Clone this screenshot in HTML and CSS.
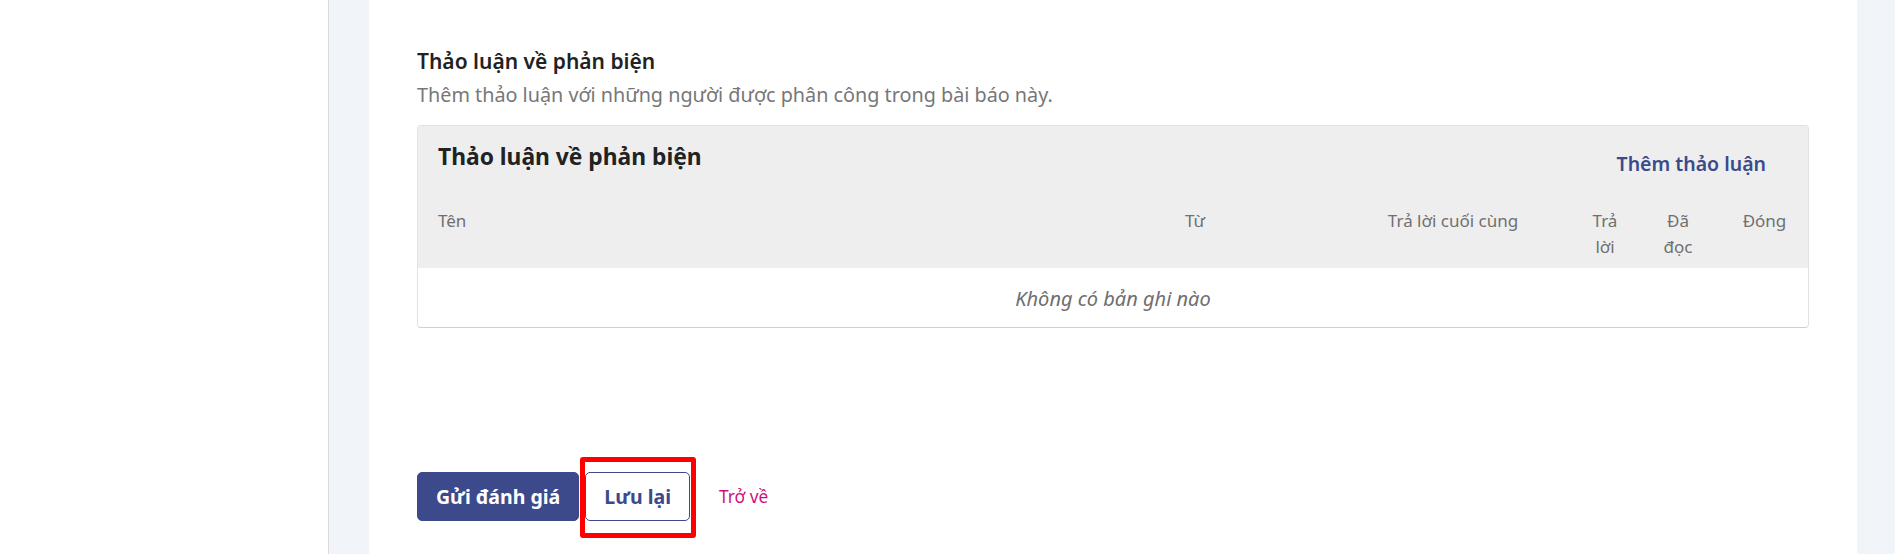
FILE: index.html
```html
<!DOCTYPE html>
<html lang="vi">
<head>
    <meta charset="UTF-8">
    <meta name="viewport" content="width=device-width, initial-scale=1.0">
    <title>Thảo luận về phản biện</title>
    <link rel="stylesheet" href="styles.css">
</head>
<body>
    <div class="sidebar"></div>

    <div class="main">
        <div class="panel">
            <h2 class="section-title">Thảo luận về phản biện</h2>
            <p class="section-desc">Thêm thảo luận với những người được phân công trong bài báo này.</p>

            <div class="grid-card">
                <div class="grid-head">
                    <h3>Thảo luận về phản biện</h3>
                    <a href="#" class="grid-action">Thêm thảo luận</a>
                </div>
                <table class="grid">
                    <colgroup>
                        <col>
                        <col class="col-from">
                        <col class="col-last">
                        <col class="col-replies">
                        <col class="col-read">
                        <col class="col-closed">
                    </colgroup>
                    <thead>
                        <tr>
                            <th class="name">Tên</th>
                            <th>Từ</th>
                            <th>Trả lời cuối cùng</th>
                            <th class="narrow">Trả lời</th>
                            <th class="narrow wide-pad">Đã đọc</th>
                            <th>Đóng</th>
                        </tr>
                    </thead>
                    <tbody>
                        <tr class="empty">
                            <td colspan="6">Không có bản ghi nào</td>
                        </tr>
                    </tbody>
                </table>
            </div>

            <div class="form-buttons">
                <button type="button" class="btn btn-primary">Gửi đánh giá</button>
                <span class="marked">
                    <button type="button" class="btn btn-default">Lưu lại</button>
                </span>
                <a href="#" class="cancel">Trở về</a>
            </div>
        </div>
    </div>
</body>
</html>
```

FILE: styles.css
```css
html, body {
    height: 100%;
}
body {
    margin: 0;
    display: flex;
    font-family: "Noto Sans", Arial, sans-serif;
    color: #222;
    background: #fff;
    overflow: hidden;
}
.sidebar {
    width: 328px;
    flex-shrink: 0;
    border-right: 1px solid #dcdcdc;
    background: #fff;
}
.main {
    flex: 1;
    background: #f1f4f9;
    padding: 0 38px 0 40px;
}
.panel {
    background: #fff;
    height: 100%;
    padding: 47px 48px 0 48px;
    box-sizing: border-box;
}
.section-title {
    margin: 0;
    font-size: 21px;
    line-height: 28px;
    font-weight: 600;
    color: #222;
}
.section-desc {
    margin: 6px 0 16px;
    font-size: 19.8px;
    line-height: 28px;
    color: #777;
}
.grid-card {
    border: 1px solid #e2e2e2;
    border-bottom-color: #cfcfcf;
    border-radius: 4px;
    overflow: hidden;
}
.grid-head {
    background: #eee;
    display: flex;
    justify-content: space-between;
    align-items: flex-start;
    padding: 15px 42px 23px 20px;
}
.grid-head h3 {
    margin: 0;
    font-size: 22.8px;
    line-height: 32px;
    font-weight: 700;
    color: #222;
}
.grid-action {
    margin-top: 10px;
    font-size: 19.5px;
    line-height: 26px;
    font-weight: 600;
    color: #3b4a8c;
    text-decoration: none;
}
.grid {
    width: 100%;
    border-collapse: collapse;
    table-layout: fixed;
}
.col-from { width: 272px; }
.col-last { width: 244px; }
.col-replies { width: 60px; }
.col-read { width: 86px; }
.col-closed { width: 87px; }
.grid thead th {
    background: #eee;
    padding: 8px 10px;
    font-size: 17px;
    line-height: 26px;
    font-weight: 400;
    color: #707070;
    text-align: center;
    vertical-align: top;
}
.grid thead th.name {
    text-align: left;
    padding-left: 20px;
}
.grid thead th.wide-pad {
    padding-left: 20px;
    padding-right: 20px;
}
.grid .empty td {
    padding: 18px 10px 15px;
    text-align: center;
    font-size: 20px;
    line-height: 26px;
    font-style: italic;
    color: #6e6e6e;
}
.form-buttons {
    margin-top: 144px;
    display: flex;
    align-items: center;
}
.btn {
    font-family: inherit;
    font-size: 19.5px;
    line-height: 25px;
    font-weight: 700;
    padding: 11px 18px;
    border: 1px solid #3c4a8c;
    border-radius: 5px;
    cursor: pointer;
}
.btn-primary {
    background: #3c4a8c;
    color: #fff;
}
.btn-default {
    background: #fff;
    color: #3c4a8c;
}
.marked {
    position: relative;
    margin-left: 6px;
    display: inline-flex;
}
.marked::after {
    content: "";
    position: absolute;
    top: -15px;
    bottom: -17px;
    left: -5px;
    right: -6px;
    border: 5px solid #ff0000;
    border-radius: 3px;
    pointer-events: none;
}
.cancel {
    margin-left: 29px;
    font-size: 17.3px;
    color: #d0107a;
    text-decoration: none;
}
```
